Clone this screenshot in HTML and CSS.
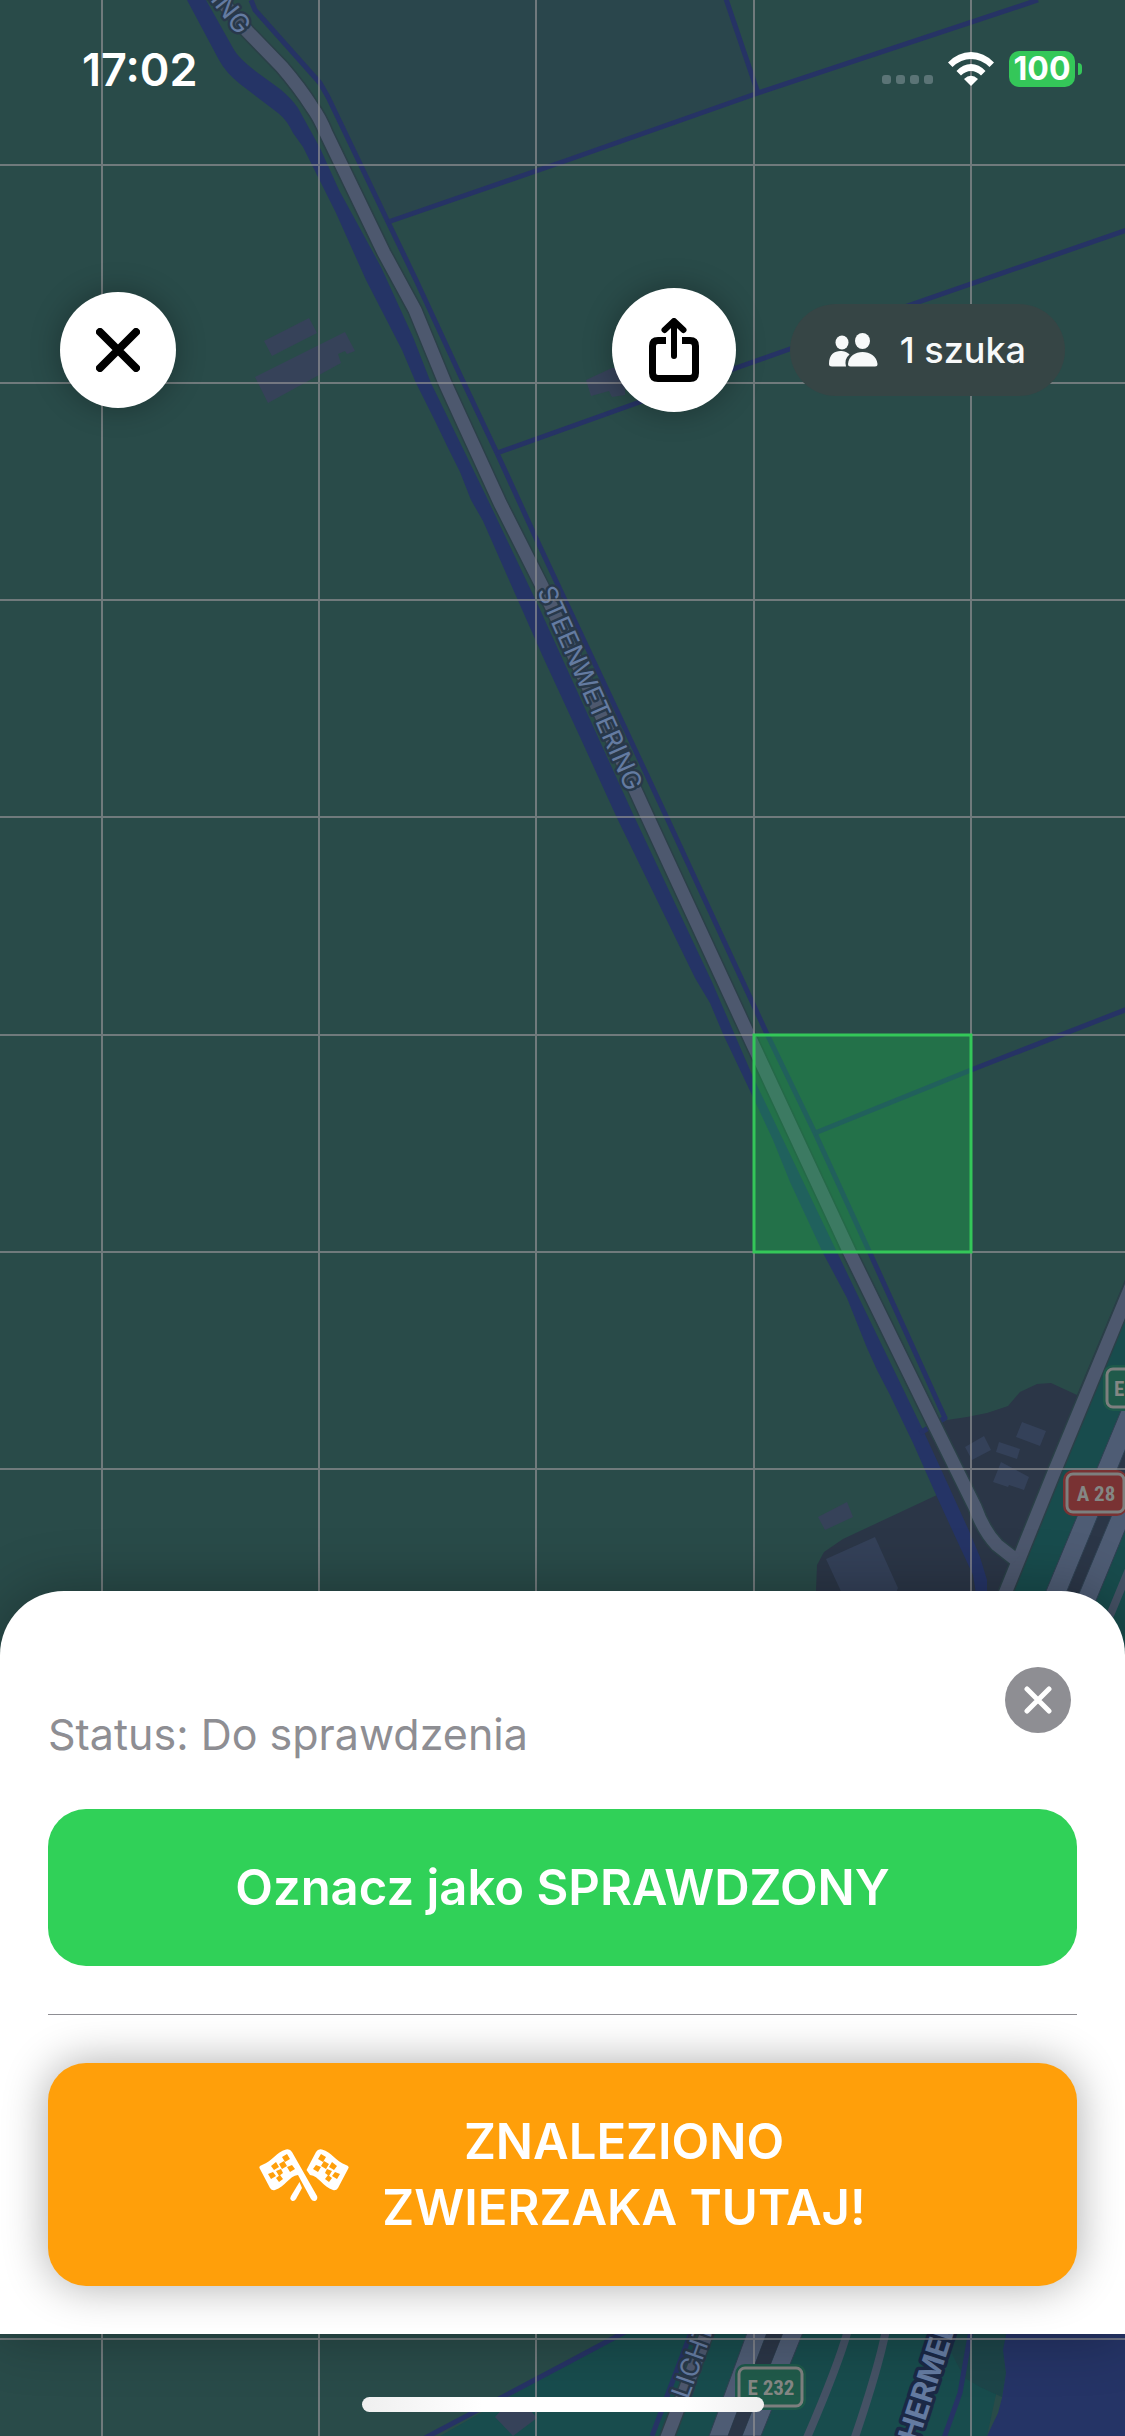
FILE: index.html
```html
<!DOCTYPE html>
<html lang="pl">
<head>
<meta charset="utf-8">
<meta name="viewport" content="width=device-width, initial-scale=1">
<title>Mapa poszukiwań</title>
<link rel="stylesheet" href="styles.css">
</head>
<body>
<div class="screen">
  <svg class="map" viewBox="0 0 1125 2436" preserveAspectRatio="xMidYMid slice" aria-hidden="true">
    <rect class="land" width="1125" height="2436"/>
    <!-- fields -->
    <path class="field" d="M251 0L328 97L388 222L562 162L758 93L725 0Z"/>
    <!-- built-up area beside the motorway -->
    <path class="urban" d="M923 1433L947 1420L967 1417L987 1413L1008 1406L1020 1392L1037 1384L1051 1383L1077 1395L1125 1280V1700H816V1591L817 1565L824 1552L843 1539L937 1495Z"/>
    <path class="verge" d="M1000 1620L1125 1300V1410L1034 1620ZM1088 1620L1125 1530V1700H1088Z"/>
    <path class="verge" d="M440 2436L563 2366L625 2330H1010L987 2436Z"/>
    <path class="park" d="M940 2330H1010L1003 2350L1006 2373L1002 2397L980 2387L965 2378L956 2362Z"/>
    <path class="water" d="M1007 2330L1003 2350L1006 2373L1002 2398L998 2413L987 2436H1125V2330Z"/>
    <!-- buildings -->
    <g class="barn">
      <path d="M264 341L309 318L317 333L272 356Z"/>
      <path d="M255 377L345 332L355 351L347 354L345 351L338 354L341 363L268 403Z"/>
      <path d="M586 380L612 368H625V395L612 397L609 391L591 396Z"/>
      <path d="M818 1517L847 1502L853 1517L825 1530Z"/>
      <path d="M495 2417L506 2405L531 2411L537 2418L513 2436Z"/>
    </g>
    <g class="house">
      <path d="M826 1559L875 1537L898 1588L893 1600H845Z"/>
      <path d="M965 1447L984 1436L991 1450L972 1460Z"/>
      <path d="M999 1442L1020 1449L1017 1459L996 1452Z"/>
      <path d="M1022 1422L1046 1431L1040 1446L1016 1437Z"/>
      <path d="M1001 1462L1029 1477L1024 1490L1009 1485L1008 1487L993 1482Z"/>
    </g>
    <!-- canal and ditches -->
    <path class="water" d="M187 0L219 60Q226 73 240 84L278 113Q287 120 293 133L303 147L336 213L366 280L402 350L416 383L436 423L449 450L460 472L471 500L483 521L543 657L580 737L617 818L695 978L710 1003L723 1034L752 1095L773 1140L790 1182L823 1253L847 1298L867 1348L877 1370L890 1395L913 1443L937 1497L960 1547L973 1575L977 1600H987V1580L980 1557L970 1533L940 1467L923 1430L860 1300L835 1248L753 1077L712 982L633 814L537 603L488 500L431 383L413 337L381 267L339 190L320 148L298 108Q292 99 280 89L258 73Q238 58 233 48L206 0Z"/>
    <g class="ditch">
      <path d="M251 0L255 10L320 83L328 97L388 222L416 280L461 377L497 453L535 536L667 818L767 1034L815 1133L870 1253L945 1418L920 1433"/>
      <path d="M388 222L562 162L758 93L1038 0M725 -4L758 93"/>
      <path d="M497 453L637 403L787 350L910 305L1130 229"/>
      <path d="M815 1133L971 1070L1130 1008"/>
      <path d="M425 2438L563 2365L625 2332"/>
      <path d="M692 2330L652 2436"/>
      <path d="M971 2330L960 2393Q956 2404 944 2438"/>
    </g>
    <!-- roads -->
    <g class="lane">
      <path d="M1034 1620L1120 1413L1128 1395V1443L1055 1620Z"/>
      <path d="M1068 1620L1128 1476V1523L1088 1620Z"/>
      <path d="M748 2330L709 2436H728L768 2330Z"/>
      <path d="M784 2330L742 2436H761L804 2330Z"/>
    </g>
    <path class="urban" d="M768 2330L728 2436H742L784 2330Z"/>
    <g class="casing">
      <path d="M219 -2L248 32L282 67Q300 88 312 107Q320 118 326 133L384 253L415 310L445 383L500 503L542 586L648 818L748 1034L850 1253L932 1420L975 1507Q983 1530 997 1545L1016 1560"/>
      <path d="M1000 1606L1055 1470L1132 1284"/>
      <path d="M708 2330L666 2440"/>
    </g>
    <g class="road">
      <path d="M1000 1606L1055 1470L1132 1284"/>
      <path d="M219 -2L248 32L282 67Q300 88 312 107Q320 118 326 133L384 253L415 310L445 383L500 503L542 586L648 818L748 1034L850 1253L932 1420L975 1507Q983 1530 997 1545L1016 1560"/>
      <path d="M708 2330L666 2440"/>
    </g>
    <g class="ramp">
      <path d="M848 2330Q838 2366 806 2440"/>
      <path d="M886 2330Q878 2370 854 2440"/>
      <path d="M1132 1562L1104 1630"/>
    </g>
    <!-- street names -->
    <g class="street">
      <text transform="translate(537 591) rotate(66)">STEENWETERING</text>
      <text transform="translate(238 36) rotate(52)" text-anchor="end">STEENWETERING</text>
      <text transform="translate(688 2400) rotate(-70)">LICHTMIS</text>
    </g>
    <text class="street street-main" transform="translate(918 2443) rotate(-72)">HERMELEN</text>
    <!-- search grid -->
    <path class="grid" d="M102 0V2436M319 0V2436M536 0V2436M754 0V2436M971 0V2436M0 165H1125M0 383H1125M0 600H1125M0 817H1125M0 1035H1125M0 1252H1125M0 1469H1125M0 2339H1125"/>
    <rect class="cell" x="754" y="1035" width="217" height="217"/>
    <!-- route shields -->
    <g class="shield">
      <rect class="halo" x="1103" y="1365" width="71" height="46" rx="10"/>
      <rect class="plate" x="1107" y="1369" width="63" height="38" rx="6"/>
      <text x="1114" y="1396">E 232</text>
      <rect class="halo" x="735" y="2364" width="71" height="46" rx="10"/>
      <rect class="plate" x="739" y="2368" width="63" height="38" rx="6"/>
      <text x="771" y="2395" text-anchor="middle">E 232</text>
    </g>
    <g class="shield shield-red">
      <rect class="halo" x="1063" y="1470" width="64" height="46" rx="10"/>
      <rect class="plate" x="1067" y="1474" width="57" height="38" rx="6"/>
      <text x="1096" y="1501" text-anchor="middle">A 28</text>
    </g>
  </svg>

  <header class="status-bar">
    <time class="clock">17:02</time>
    <div class="indicators">
      <span class="signal"><i></i><i></i><i></i><i></i></span>
      <svg class="wifi" viewBox="0 0 46 34" aria-label="Wi-Fi">
        <path d="M0 10.500Q10 0 23 0T46 10.500L41.500 15Q33 7 23 7T4.500 15Z"/>
        <path d="M8.500 19Q15 12 23 12T37.500 19L33 23.500Q28.500 19 23 19T13 23.500Z"/>
        <path d="M16 27Q23 20.500 30 27L23 34Z"/>
      </svg>
      <span class="battery"><b>100</b></span>
    </div>
  </header>

  <nav class="toolbar">
    <button class="round round-close" aria-label="Zamknij mapę">
      <svg viewBox="0 0 44 44"><path d="M4 4L40 40M40 4L4 40"/></svg>
    </button>
    <div class="tools">
      <button class="round round-share" aria-label="Udostępnij">
        <svg viewBox="0 0 50 64"><path class="box" d="M17 22.500H9Q3.500 22.500 3.500 28V55Q3.500 60.500 9 60.500H41Q46.500 60.500 46.500 55V28Q46.500 22.500 41 22.500H33"/><path class="arrow" d="M25 38V4M15.500 12L25 3L34.500 12"/></svg>
      </button>
      <div class="searchers">
        <svg viewBox="0 0 49 34" aria-hidden="true"><ellipse cx="13" cy="9.500" rx="6.500" ry="7"/><ellipse cx="33.500" cy="8" rx="7.500" ry="8"/><path d="M0 31C0 14 17 17 20.500 21.500Q15 26 17 33.500H3Q0 33.500 0 31Z"/><path d="M19 31C20 15 47 15 48.500 31Q48.500 33.500 46 33.500H21.500Q19 33.500 19 31Z"/></svg>
        <span>1 szuka</span>
      </div>
    </div>
  </nav>

  <main class="sheet">
    <div class="sheet-head">
      <p class="status">Status: Do sprawdzenia</p>
      <button class="dismiss" aria-label="Zamknij panel">
        <svg viewBox="0 0 28 28"><path d="M3 3L25 25M25 3L3 25"/></svg>
      </button>
    </div>
    <button class="action action-checked">Oznacz jako SPRAWDZONY</button>
    <hr class="rule">
    <button class="action action-found">
      <svg class="flags" viewBox="0 0 90 52" aria-hidden="true">
        <path d="M1 20Q-1 17 3 16C14 12 17 3 27 .5Q31 -.5 33 3L58 47Q59 50 57 51.500Q54 53 52 50L39 26C30 27 26 38 16 41Q13 42 11 39Z"/>
        <path d="M57 3Q59 -.5 63 .5C73 3 76 12 87 16Q91 17 89 20L79 39Q77 42 74 41C64 38 60 27 51 26L47.500 21Z"/>
        <path d="M40.500 33L43 39L37 50Q35 53 32.500 51.500Q30.500 50 32 47Z"/>
        <g class="checks">
          <path id="checks" d="M23 8L28 5L31 10L26 13ZM12 17L17 13L20 18L15 21ZM20 15L25 12L28 17L23 20ZM28 18L33 16L36 20L31 23ZM17 22L22 20L24 24L20 27ZM9 25L14 23L17 27L12 30ZM17 29L21 26L24 30L20 33Z"/>
          <use href="#checks" transform="translate(90 0) scale(-1 1)"/>
        </g>
      </svg>
      <span>ZNALEZIONO<br>ZWIERZAKA TUTAJ!</span>
    </button>
  </main>
  <div class="home"><span class="home-bar"></span></div>
</div>
</body>
</html>
```

FILE: styles.css
```css
* {
  box-sizing: border-box;
}

body {
  margin: 0;
  font-family: Inter, "Liberation Sans", sans-serif;
}

button {
  margin: 0;
  padding: 0;
  border: 0;
  font: inherit;
  cursor: pointer;
}

.screen {
  position: relative;
  isolation: isolate;
  display: flex;
  flex-direction: column;
  min-height: 100vh;
  overflow: hidden;
  background: #294a49;
}

/* Map */
.map {
  position: absolute;
  inset: 0;
  z-index: -1;
  width: 100%;
  height: 100%;
}

.land { fill: #294b49; }
.field { fill: #2a464c; }
.urban { fill: #2b3647; }
.verge { fill: #184c4d; }
.park { fill: #1d4549; }
.water { fill: #253466; }
.barn { fill: #364259; }
.house { fill: #344159; }
.lane { fill: #4e5c74; stroke: #2f4152; stroke-width: 1; }

.ditch,
.road,
.ramp,
.casing {
  fill: none;
  stroke-linejoin: round;
}

.ditch { stroke: #263365; stroke-width: 5; }
.casing { stroke: #2b4048; stroke-width: 16; }
.road { stroke: #4d586e; stroke-width: 13; }
.ramp { stroke: #455265; stroke-width: 8; }

.street {
  font-size: 26px;
  fill: #647ba1;
  stroke: #28384a;
  stroke-width: 5;
  stroke-linejoin: round;
  paint-order: stroke;
}

.street-main {
  font-size: 30px;
  font-weight: 700;
  stroke: #1b2946;
  stroke-width: 7;
}

.grid {
  fill: none;
  stroke: #8e8e93;
  stroke-opacity: .7;
  stroke-width: 2;
}

.cell {
  fill: #18ca48;
  fill-opacity: .3;
  stroke: #34c759;
  stroke-width: 3;
}

.shield text {
  font-family: "Liberation Sans Narrow", "Roboto Condensed", Roboto, sans-serif;
  font-size: 21px;
  font-weight: 700;
  fill: #848784;
}

.halo { fill: #1d594a; }
.plate { fill: #205a4a; stroke: #7d7f7e; stroke-width: 3; }
.shield-red .halo { fill: #793233; }
.shield-red .plate { fill: #793233; }

/* Status bar */
.status-bar {
  display: flex;
  align-items: center;
  justify-content: space-between;
  height: 138px;
  padding: 0 43px 0 82px;
  color: #fff;
}

.clock {
  font-size: 45px;
  font-weight: 600;
}

.indicators {
  display: flex;
  align-items: center;
}

.signal {
  display: flex;
  align-self: flex-end;
  gap: 5px;
  margin: 0 15px 3px 0;
}

.signal i {
  width: 9px;
  height: 9px;
  border-radius: 3px;
  background: #5b7476;
}

.wifi {
  width: 46px;
  height: 34px;
  margin-right: 15px;
  fill: #fff;
}

.battery {
  display: flex;
  align-items: center;
  gap: 3px;
}

.battery b {
  width: 66px;
  border-radius: 10px;
  background: #34c759;
  font-size: 32px;
  font-weight: 700;
  line-height: 36px;
  text-align: center;
}

.battery::after {
  content: "";
  width: 4px;
  height: 12px;
  border-radius: 0 4px 4px 0;
  background: #34c759;
}

/* Map controls */
.toolbar {
  display: flex;
  align-items: center;
  justify-content: space-between;
  padding: 150px 60px 0;
}

.tools {
  display: flex;
  align-items: center;
  gap: 54px;
}

.round {
  display: grid;
  place-items: center;
  border-radius: 50%;
  background: #fff;
  box-shadow: 0 0 30px rgba(0, 0, 0, .3);
}

.round svg {
  fill: none;
  stroke: #000;
  stroke-linecap: round;
  stroke-linejoin: round;
}

.round-close {
  width: 116px;
  height: 116px;
}

.round-close svg {
  width: 44px;
  height: 44px;
  stroke-width: 8;
}

.round-share {
  width: 124px;
  height: 124px;
}

.round-share svg {
  width: 50px;
  height: 64px;
}

.box {
  stroke-width: 7;
  stroke-linecap: butt;
}

.arrow { stroke-width: 6; }

.searchers {
  display: flex;
  align-items: center;
  gap: 22px;
  height: 92px;
  padding: 0 39px;
  border-radius: 46px;
  background: #364545;
  color: #f7f9f9;
  font-size: 36px;
  font-weight: 500;
}

.searchers svg {
  width: 49px;
  height: 34px;
  fill: currentColor;
}

/* Bottom sheet */
.sheet {
  margin-top: auto;
  padding: 76px 48px 48px;
  border-radius: 64px 64px 0 0;
  background: #fff;
  box-shadow: 0 0 60px rgba(0, 0, 0, .3);
}

.sheet-head {
  display: flex;
  align-items: flex-end;
  justify-content: space-between;
  height: 94px;
  margin-bottom: 48px;
}

.status {
  margin: 0;
  color: #8e8e93;
  font-size: 43px;
  line-height: 54px;
}

.dismiss {
  display: grid;
  place-items: center;
  align-self: flex-start;
  width: 66px;
  height: 66px;
  margin-right: 6px;
  border-radius: 50%;
  background: #8e8e93;
}

.dismiss svg {
  width: 28px;
  height: 28px;
  fill: none;
  stroke: #fff;
  stroke-width: 5;
  stroke-linecap: round;
}

.action {
  display: flex;
  align-items: center;
  justify-content: center;
  width: 100%;
  border-radius: 38px;
  color: #fff;
  font-size: 49px;
  font-weight: 600;
  line-height: 66px;
}

.action-checked {
  min-height: 157px;
  background: #30d158;
}

.rule {
  height: 1px;
  margin: 48px 0;
  border: 0;
  background: #8e8e93;
}

.action-found {
  gap: 33px;
  min-height: 223px;
  background: #ff9f0a;
  box-shadow: 0 0 45px rgba(0, 0, 0, .33);
}

.flags {
  width: 90px;
  height: 52px;
  fill: #fff;
}

.checks { fill: #ff9f0a; }

/* Home indicator */
.home {
  display: flex;
  align-items: flex-end;
  justify-content: center;
  height: 102px;
  padding-bottom: 24px;
}

.home-bar {
  width: 402px;
  height: 15px;
  border-radius: 8px;
  background: linear-gradient(90deg, #efefef, #fff 30%, #fff 80%, #efefef);
}
```
